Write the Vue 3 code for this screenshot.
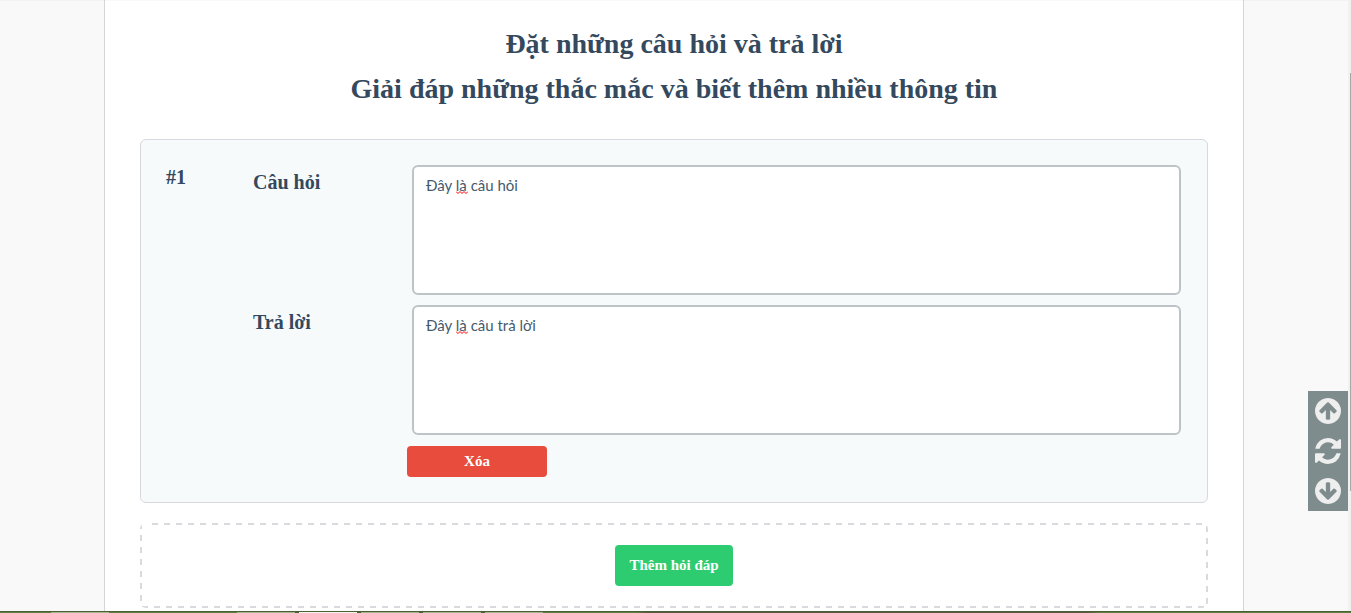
<script setup>
import { ref } from 'vue'

const items = ref([{ question: 'Đây là câu hỏi', answer: 'Đây là câu trả lời' }])

const circleArrow =
  'M1412 895q0-27-18-45l-362-362-91-91q-18-18-45-18t-45 18l-91 91-362 362q-18 18-18 45t18 45l91 91q18 18 45 18t45-18l189-189v502q0 26 19 45t45 19h128q26 0 45-19t19-45v-502l189 189q19 19 45 19t45-19l91-91q18-18 18-45zm252 1q0 209-103 385.500t-279.500 279.500-385.500 103-385.500-103-279.500-279.500-103-385.500 103-385.500 279.500-279.500 385.500-103 385.500 103 279.500 279.500 103 385.500z'
const refresh =
  'M1511 928q0 5-1 7-64 268-268 434.500t-478 166.500q-146 0-282.500-55t-243.500-157l-129 129q-19 19-45 19t-45-19-19-45v-448q0-26 19-45t45-19h448q26 0 45 19t19 45-19 45l-137 137q71 66 161 102t187 36q134 0 250-65t186-179q11-17 53-117 8-23 30-23h192q13 0 22.500 9.500t9.500 22.500zm25-800v448q0 26-19 45t-45 19h-448q-26 0-45-19t-19-45 19-45l138-138q-148-137-349-137-134 0-250 65t-186 179q-11 17-53 117-8 23-30 23h-199q-13 0-22.500-9.500t-9.500-22.500v-7q65-268 270-434.500t480-166.500q146 0 284 55.500t245 156.500l130-129q19-19 45-19t45 19 19 45z'

function add() {
  items.value.push({ question: '', answer: '' })
}
function remove(i) {
  items.value.splice(i, 1)
}
</script>

<template>
  <div class="page">
    <main class="sheet">
      <h1 class="title">Đặt những câu hỏi và trả lời<br />Giải đáp những thắc mắc và biết thêm nhiều thông tin</h1>

      <section v-for="(item, i) in items" :key="i" class="card">
        <div class="number">#{{ i + 1 }}</div>
        <div class="fields">
          <div class="field">
            <label :for="'question-' + i">Câu hỏi</label>
            <div class="box">
              <textarea :id="'question-' + i" v-model="item.question" spellcheck="false"></textarea>
              <svg v-if="item.question" class="squiggle" viewBox="0 0 12 3" aria-hidden="true">
                <path d="M0 .5L2 2.500L4 .5L6 2.500L8 .5L10 2.500L12 .5" />
              </svg>
            </div>
          </div>
          <div class="field">
            <label :for="'answer-' + i">Trả lời</label>
            <div class="box">
              <textarea :id="'answer-' + i" v-model="item.answer" spellcheck="false"></textarea>
              <svg v-if="item.answer" class="squiggle" viewBox="0 0 12 3" aria-hidden="true">
                <path d="M0 .5L2 2.500L4 .5L6 2.500L8 .5L10 2.500L12 .5" />
              </svg>
            </div>
          </div>
          <div class="actions">
            <button type="button" class="btn remove" @click="remove(i)">Xóa</button>
          </div>
        </div>
      </section>

      <div class="adder">
        <button type="button" class="btn add" @click="add">Thêm hỏi đáp</button>
      </div>
    </main>

    <div class="scrollbar"><div class="thumb"></div></div>

    <nav class="tools">
      <button type="button" aria-label="Lên đầu trang">
        <svg viewBox="128 128 1536 1536"><path :d="circleArrow" /></svg>
      </button>
      <button type="button" aria-label="Tải lại">
        <svg viewBox="0 0 1536 1536"><path :d="refresh" /></svg>
      </button>
      <button type="button" aria-label="Xuống cuối trang">
        <svg class="down" viewBox="128 128 1536 1536"><path :d="circleArrow" /></svg>
      </button>
    </nav>

    <div class="taskbar"></div>
  </div>
</template>

<style>
body {
  margin: 0;
  background: #f9f9f9;
}
</style>

<style scoped>
* {
  box-sizing: border-box;
}
.page {
  display: flex;
  justify-content: center;
  min-height: 100vh;
  padding-right: 3px;
  background: #f9f9f9;
  box-shadow: inset 0 1px 0 #f3f3f3;
  color: #34495e;
  font-family: "Liberation Serif", "Times New Roman", serif;
}
.sheet {
  flex: 1;
  max-width: 1140px;
  padding: 21px 35px 5px;
  background: #fff;
  border: solid #d5d6d8;
  border-width: 0 1px;
  box-shadow: inset 0 1px 0 #f9f9f9;
}
.title {
  margin: 0 0 28px;
  font-size: 28px;
  line-height: 45px;
  text-align: center;
}
.card {
  display: flex;
  margin-bottom: 20px;
  padding: 25px 26px 25px 25px;
  background: #f6fafb;
  border: 1px solid #d7d9de;
  border-radius: 6px;
}
.number {
  width: 87px;
  font-size: 20px;
  line-height: 24px;
  font-weight: 700;
}
.fields {
  flex: 1;
}
.field {
  display: flex;
  margin-bottom: 10px;
}
.field label {
  width: 159px;
  padding-top: 5px;
  font-size: 20px;
  line-height: 24px;
  font-weight: 700;
}
.box {
  position: relative;
  flex: 1;
}
textarea {
  display: block;
  width: 100%;
  height: 130px;
  padding: 8px 12px;
  resize: none;
  background: #fff;
  border: 2px solid #bdc3c7;
  border-radius: 6px;
  color: #465a6d;
  font: 15px/21px Lato, "Noto Sans", sans-serif;
  outline: none;
}
.squiggle {
  position: absolute;
  left: 44px;
  top: 26px;
  width: 12px;
  height: 3px;
  fill: none;
  stroke: #f00;
}
.btn {
  border: 0;
  border-radius: 4px;
  color: #fff;
  font: 700 15px/21px "Liberation Serif", "Times New Roman", serif;
  cursor: pointer;
}
.actions {
  padding: 1px 0 0 154px;
}
.remove {
  display: block;
  width: 140px;
  padding: 5px;
  background: #e74c3c;
}
.adder {
  --dash: #d9d9de 0 6px, transparent 6px 12px;
  display: flex;
  justify-content: center;
  padding: 22px;
  border-radius: 6px;
  background:
    repeating-linear-gradient(90deg, var(--dash)) 12px 0 / 100% 2px no-repeat,
    repeating-linear-gradient(90deg, var(--dash)) 2px 100% / 100% 2px no-repeat,
    repeating-linear-gradient(180deg, var(--dash)) 0 0 / 2px 100% no-repeat,
    repeating-linear-gradient(180deg, var(--dash)) 100% 3px / 2px 100% no-repeat;
}
.add {
  padding: 10px 14px;
  background: #2ecc71;
}
.tools {
  position: fixed;
  right: 3px;
  bottom: 102px;
  display: flex;
  flex-direction: column;
  background: #7f8c8d;
}
.tools button {
  display: grid;
  place-items: center;
  width: 40px;
  height: 40px;
  padding: 0;
  border: 0;
  background: none;
  cursor: pointer;
}
.tools svg {
  width: 26px;
  height: 26px;
  fill: #eee;
}
.tools .down {
  transform: rotate(180deg);
}
.scrollbar {
  position: fixed;
  top: 0;
  right: 0;
  bottom: 0;
  width: 3px;
  padding: 73px 0 0 2px;
  background: #f1f1f1;
}
.thumb {
  height: 418px;
  background: #a8a8a8;
}
.taskbar {
  position: fixed;
  right: 0;
  bottom: 0;
  left: 0;
  height: 2px;
  border-top: 1px solid #4b5f35;
  background: linear-gradient(
    90deg,
    #5f7f40 51px, #a3b590 51px 109px, #5f7f40 109px 237px, #a3b590 237px 295px,
    #4b5f35 295px 299px, #f5f5f0 299px 357px, #4b5f35 357px 361px, #a3b590 361px 419px,
    #4b5f35 419px 423px, #a3b590 423px 481px, #4b5f35 481px 485px, #a3b590 485px 543px,
    #5f7f40 543px 636px, #5d5845 646px 1088px, #5f7f40 1100px
  );
}
</style>
